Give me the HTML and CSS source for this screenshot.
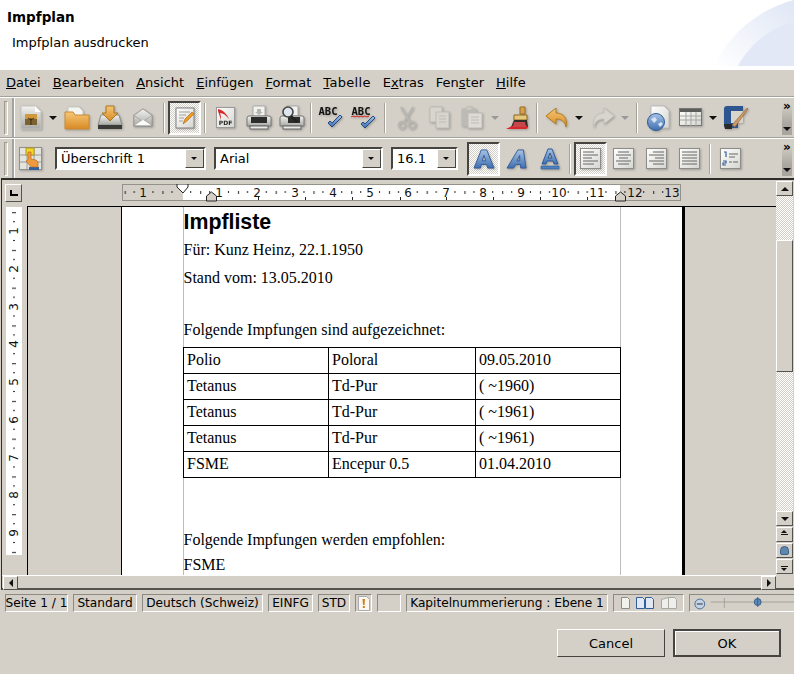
FILE: index.html
```html
<!DOCTYPE html>
<html lang="de">
<head>
  <meta charset="UTF-8" />
  <title>Impfplan</title>
  <link rel="stylesheet" href="styles.css">
</head>
<body>
  <svg class="defs" width="0" height="0">
    <defs>
      <linearGradient id="paper" x1="0" y1="0" x2="1" y2="1"><stop offset="0" stop-color="#fff"/><stop offset="1" stop-color="#d5d5d0"/></linearGradient>
      <linearGradient id="orange" x1="0" y1="0" x2="0" y2="1"><stop offset="0" stop-color="#f6c777"/><stop offset="1" stop-color="#d98a25"/></linearGradient>
      <linearGradient id="blue" x1="0" y1="0" x2="0" y2="1"><stop offset="0" stop-color="#a8c3e4"/><stop offset="1" stop-color="#3f6fb0"/></linearGradient>
      <linearGradient id="metal" x1="0" y1="0" x2="0" y2="1"><stop offset="0" stop-color="#f2f2f0"/><stop offset="1" stop-color="#a9a9a5"/></linearGradient>
      <linearGradient id="wash" x1="0" y1="1" x2="1" y2="0"><stop offset="0" stop-color="#fff"/><stop offset="1" stop-color="#dfe6f5"/></linearGradient>
      <pattern id="hticks" x="21.500" y="0" width="37.750" height="16" patternUnits="userSpaceOnUse">
        <rect x="9" y="7" width="1" height="2" fill="#222"/>
        <rect x="19" y="7" width="1" height="3" fill="#222"/>
        <rect x="28" y="7" width="1" height="2" fill="#222"/>
      </pattern>
      <pattern id="vticks" x="0" y="24" width="16" height="37.750" patternUnits="userSpaceOnUse">
        <rect x="7" y="9" width="2" height="1" fill="#222"/>
        <rect x="6" y="19" width="4" height="1" fill="#222"/>
        <rect x="7" y="28" width="2" height="1" fill="#222"/>
      </pattern>
    </defs>
  </svg>

  <header class="head">
    <div class="head-title">Impfplan</div>
    <div class="head-sub">Impfplan ausdrucken</div>
    <svg class="head-art" width="80" height="66" viewBox="0 0 80 66">
      <path d="M0 66C14 36 42 10 80 0V66z" fill="url(#wash)"/>
      <path d="M24 66C36 44 56 28 80 22V66z" fill="#e2e8f6"/>
    </svg>
  </header>

  <main class="dialog">
    <nav class="menubar">
      <span><u>D</u>atei</span>
      <span><u>B</u>earbeiten</span>
      <span><u>A</u>nsicht</span>
      <span><u>E</u>infügen</span>
      <span><u>F</u>ormat</span>
      <span class="menu-wide"><u>T</u>abelle</span>
      <span>E<u>x</u>tras</span>
      <span>Fen<u>s</u>ter</span>
      <span><u>H</u>ilfe</span>
    </nav>

    <div class="toolbar">
      <i class="grip"></i>
      <button class="tool">
        <svg width="22" height="25" viewBox="0 0 22 25"><path d="M1 1h14l6 6v17H1z" fill="url(#metal)" stroke="#c4c4bf"/><path d="M15 1v6h6z" fill="#fff"/><rect x="5" y="9" width="12" height="11" fill="#7d6231"/><path d="M5 9h12v5H5z" fill="#d09a3c"/><path d="M11 20v-7M8 13l3 2 3-2" stroke="#3d2c12" fill="none"/></svg>
      </button>
      <span class="arrow"></span>
      <button class="tool">
        <svg width="26" height="26" viewBox="0 0 26 26"><path d="M4 2h11l4 4v10H4z" fill="#f4f4f0" stroke="#c9c9c4"/><path d="M1 7h8l2 3h14v14H1z" fill="url(#orange)" stroke="#c98a34"/></svg>
      </button>
      <button class="tool">
        <svg width="26" height="26" viewBox="0 0 26 26"><path d="M4 10h18l3 10H1z" fill="url(#metal)" stroke="#8c8c88"/><rect x="1" y="20" width="24" height="4" fill="#3a3a38"/><path d="M9 1h8v7h4l-8 8-8-8h4z" fill="url(#orange)" stroke="#a8791f"/></svg>
      </button>
      <button class="tool">
        <svg width="22" height="22" viewBox="0 0 24 24"><path d="M2 9l10-7 10 7v12H2z" fill="url(#metal)" stroke="#8f8f8b"/><path d="M2 9l10 7 10-7M2 21l8-7M22 21l-8-7" fill="none" stroke="#a5a5a1"/><path d="M3 20l9-6 9 6z" fill="#fbfbf9"/></svg>
      </button>
      <i class="sep sep-9"></i>
      <button class="tool on">
        <svg width="20" height="22" viewBox="0 0 20 22"><rect x="1" y="1" width="18" height="20" fill="url(#paper)" stroke="#808080"/><path d="M4 5h11M4 8h7M4 11h5M4 14h4" stroke="#a0a09c"/><path d="M8 17l2-5 7-7 2 2-7 7z" fill="#ee9a23" stroke="#a76a10" stroke-width=".6"/></svg>
      </button>
      <i class="sep sep-8"></i>
      <button class="tool">
        <svg width="20" height="22" viewBox="0 0 20 22"><rect x=".5" y=".5" width="18" height="20" fill="url(#paper)" stroke="#999"/><path d="M2 2c5 1 9 5 11 10C10 8 7 6 4 6c1 2 1 5 1 7L2 4z" fill="#d62a2a"/><text class="pdf" x="9.500" y="18">PDF</text></svg>
      </button>
      <button class="tool">
        <svg width="26" height="26" viewBox="0 0 26 26"><path d="M7 1h12v10H7z" fill="#f2f2ee" stroke="#aaa"/><path d="M11 4h4v3h2l-4 3-4-3h2z" fill="#b5b5b1"/><path d="M3 11h20a2 2 0 0 1 2 2v8H1v-8a2 2 0 0 1 2-2z" fill="url(#metal)" stroke="#777"/><rect x="5" y="12" width="16" height="6" fill="#2c2c2a"/><rect x="4" y="21" width="18" height="3" fill="#e9e9e5" stroke="#666"/></svg>
      </button>
      <button class="tool">
        <svg width="26" height="26" viewBox="0 0 26 26"><path d="M8 1h11v10H8z" fill="#f2f2ee" stroke="#aaa"/><path d="M3 11h20a2 2 0 0 1 2 2v8H1v-8a2 2 0 0 1 2-2z" fill="url(#metal)" stroke="#777"/><rect x="9" y="12" width="12" height="6" fill="#2c2c2a"/><rect x="4" y="21" width="18" height="3" fill="#e9e9e5" stroke="#666"/><circle cx="9" cy="7" r="5" fill="#dde6ee" stroke="#444" stroke-width="1.600"/><path d="M12 11l6 6" stroke="#222" stroke-width="2.400"/></svg>
      </button>
      <i class="sep sep-5"></i>
      <button class="tool">
        <svg width="26" height="26" viewBox="0 0 26 26"><text class="abc" x="11" y="10">ABC</text><path d="M11 18l4 4L25 12l-2-2-8 8-2-2z" fill="url(#blue)" stroke="#1f4a86"/></svg>
      </button>
      <button class="tool">
        <svg width="26" height="26" viewBox="0 0 26 26"><text class="abc" x="11" y="10">ABC</text><path d="M1 12l2-1 2 1 2-1 2 1 2-1 2 1 2-1 2 1 2-1" fill="none" stroke="#d32020"/><path d="M11 19l4 4L25 13l-2-2-8 8-2-2z" fill="url(#blue)" stroke="#1f4a86"/></svg>
      </button>
      <i class="sep sep-11"></i>
      <button class="tool">
        <svg width="20" height="24" viewBox="0 0 20 24" fill="none" stroke="#b8b6b0" stroke-width="2"><path d="M4 1l9 15M16 1L7 16"/><circle cx="5" cy="19" r="3.200"/><circle cx="15" cy="19" r="3.200"/></svg>
      </button>
      <button class="tool">
        <svg width="22" height="24" viewBox="0 0 22 24" fill="#d8d5cf" stroke="#bdbbb5"><path d="M1 1h12v15H1z"/><path d="M7 6h13v16H7z"/><path d="M10 10h7M10 13h7M10 16h7" /></svg>
      </button>
      <button class="tool tool-left">
        <svg width="22" height="24" viewBox="0 0 22 24" fill="#cfccc6" stroke="#bdbbb5"><path d="M1 3h14v17H1z" fill="#bdbab4"/><path d="M5 1h6v3H5z"/><path d="M7 7h14v15H7z" fill="#dedbd6"/><path d="M10 11h8M10 14h8M10 17h8"/></svg>
      </button>
      <span class="arrow arrow-off arrow-tight"></span>
      <button class="tool">
        <svg width="24" height="24" viewBox="0 0 24 24"><path d="M12 1h5v7h-5z" fill="#d7a04c" stroke="#9a6c22" transform="translate(2)"/><path d="M8 9h13v5H8z" fill="#e7c77c" stroke="#8d6a25"/><path d="M8 14h13l1 7H5z" fill="#302c28"/><path d="M0 23l8-4h12l2 3-2 1z" fill="#d8262c"/><path d="M8 16h11l1 5H7z" fill="#c8454a"/></svg>
      </button>
      <i class="sep sep-6"></i>
      <button class="tool">
        <svg width="24" height="22" viewBox="0 0 24 22"><path d="M11 1L1 9l10 8v-5c5 0 9 2 10 8 2-9-3-14-10-14z" fill="url(#orange)" stroke="#b07c1e"/></svg>
      </button>
      <span class="arrow"></span>
      <button class="tool">
        <svg width="24" height="22" viewBox="0 0 24 22"><path d="M13 1l10 8-10 8v-5c-5 0-9 2-10 8-2-9 3-14 10-14z" fill="#d8d5cf" stroke="#c2bfb9"/></svg>
      </button>
      <span class="arrow arrow-off"></span>
      <i class="sep sep-9"></i>
      <button class="tool">
        <svg width="24" height="26" viewBox="0 0 24 26"><path d="M5 1h13l5 5v17H5z" fill="url(#paper)" stroke="#bbb"/><circle cx="10" cy="17" r="8.500" fill="url(#blue)" stroke="#2d5b97"/><path d="M5 14l4-2 2 3-3 3zM12 19l3-2 2 2-3 3z" fill="#d6e4f5"/></svg>
      </button>
      <button class="tool">
        <svg width="24" height="20" viewBox="0 0 24 20"><rect x=".5" y=".5" width="22" height="17" fill="url(#paper)" stroke="#777"/><rect x="1" y="1" width="21" height="3" fill="#5c5c5a"/><path d="M1 8h21M1 12h21M7 4v14M12 4v14M17 4v14" stroke="#a5a5a1"/></svg>
      </button>
      <span class="arrow arrow-slim"></span>
      <button class="tool">
        <svg width="26" height="26" viewBox="0 0 26 26"><path d="M4 1h16v5H8v12h7v5H3a2 2 0 0 1-2-2V4a3 3 0 0 1 3-3z" fill="#2d5590"/><path d="M8 6h12v12H8z" fill="#d8d4cc"/><path d="M1 19h8v5H2z" fill="#2a2a28"/><path d="M9 20L24 3l1 1L12 22z" fill="#c99a6a" stroke="#8f5a2a" stroke-width=".6"/></svg>
      </button>
      <div class="more"><span class="chevrons">»</span><span class="more-arrow"></span></div>
    </div>

    <div class="toolbar toolbar-format">
      <i class="grip"></i>
      <button class="tool">
        <svg width="24" height="24" viewBox="0 0 24 24"><rect x=".5" y=".5" width="22" height="22" fill="#e4e4df" stroke="#8f8f8b"/><path d="M8 .5v22M15 .5v22M.5 8h22M.5 15h22" stroke="#9a9a96"/><rect x="7" y="1" width="8" height="7" fill="#f5d52a" stroke="#b09a18"/><rect x="10" y="20" width="10" height="3" fill="#33609e"/><path d="M9 5h3v7l5 1 2 2v5H12l-5-6 2-1z" fill="#ef9a3e" stroke="#b96a1a" stroke-width=".7"/></svg>
      </button>
      <div class="combo combo-style"><span class="combo-text">Überschrift 1</span><span class="combo-btn"></span></div>
      <div class="combo combo-font"><span class="combo-text">Arial</span><span class="combo-btn"></span></div>
      <div class="combo combo-size"><span class="combo-text">16.1</span><span class="combo-btn"></span></div>
      <button class="tool on first-fmt">
        <svg width="22" height="20" viewBox="0 0 24 22"><path d="M9 1h6l8 20h-7l-1-4H9l-1 4H1zM12 7l-2 6h4z" fill="url(#blue)" stroke="#2d5b97" fill-rule="evenodd"/></svg>
      </button>
      <button class="tool">
        <svg width="22" height="20" viewBox="0 0 24 22"><path d="M13 1h6l3 20h-6v-4h-5l-3 4H1zM15 7l-3 6h3z" fill="url(#blue)" stroke="#2d5b97" fill-rule="evenodd"/></svg>
      </button>
      <button class="tool">
        <svg width="20" height="22" viewBox="0 0 20 22"><path d="M8 1h4l6 15h-4l-1-3H7l-1 3H2zM10 5l-2 5h4z" fill="url(#blue)" stroke="#2d5b97" fill-rule="evenodd"/><rect x="1" y="18" width="18" height="3" fill="#4d7fbe" stroke="#2d5b97" stroke-width=".6"/></svg>
      </button>
      <i class="sep sep-8"></i>
      <button class="tool on">
        <svg width="22" height="22" viewBox="0 0 22 22"><rect x=".5" y=".5" width="20" height="20" fill="url(#paper)" stroke="#8c8c88"/><path d="M3 4h11M3 7h15M3 10h9M3 13h15M3 16h11" stroke="#666"/></svg>
      </button>
      <button class="tool">
        <svg width="22" height="22" viewBox="0 0 22 22"><rect x=".5" y=".5" width="20" height="20" fill="url(#paper)" stroke="#8c8c88"/><path d="M5 4h11M3 7h15M6 10h9M3 13h15M5 16h11" stroke="#666"/></svg>
      </button>
      <button class="tool">
        <svg width="22" height="22" viewBox="0 0 22 22"><rect x=".5" y=".5" width="20" height="20" fill="url(#paper)" stroke="#8c8c88"/><path d="M7 4h11M3 7h15M9 10h9M3 13h15M7 16h11" stroke="#666"/></svg>
      </button>
      <button class="tool">
        <svg width="22" height="22" viewBox="0 0 22 22"><rect x=".5" y=".5" width="20" height="20" fill="url(#paper)" stroke="#8c8c88"/><path d="M3 4h15M3 7h15M3 10h15M3 13h15M3 16h15" stroke="#666"/></svg>
      </button>
      <i class="sep sep-8"></i>
      <button class="tool">
        <svg width="22" height="22" viewBox="0 0 22 22"><rect x=".5" y=".5" width="20" height="20" fill="url(#paper)" stroke="#8c8c88"/><path d="M4 4h2v5M3 13h3v2H3v2h3" fill="none" stroke="#33609e" stroke-width="1.200"/><path d="M9 6h9M9 9h6M9 14h3M13 14h5" stroke="#666"/></svg>
      </button>
      <div class="more"><span class="chevrons">»</span><span class="more-arrow"></span></div>
    </div>

    <section class="workspace">
      <div class="corner"><span class="corner-mark"></span></div>
      <div class="hruler">
        <svg width="559" height="18" viewBox="0 0 559 18">
          <rect x=".5" y=".5" width="558" height="16" fill="#d4d0c8" stroke="#94918a"/>
          <rect x="61" y="1" width="437" height="15" fill="#fff"/>
          <rect x="1" y="1" width="557" height="15" fill="url(#hticks)"/>
          <path class="tabs" d="M136.500 16v-3M183.500 16v-3M230.500 16v-3M278.500 16v-3M324.500 16v-3M371.500 16v-3M418.500 16v-3M465.500 16v-3"/>
          <g class="rnum">
            <text x="21" y="13">1</text><text x="97" y="13">1</text><text x="135" y="13">2</text><text x="173" y="13">3</text><text x="211" y="13">4</text><text x="248" y="13">5</text><text x="286" y="13">6</text><text x="324" y="13">7</text><text x="361" y="13">8</text><text x="399" y="13">9</text><text x="437" y="13">10</text><text x="475" y="13">11</text><text x="513" y="13">12</text><text x="550" y="13">13</text>
          </g>
          <path d="M55 0h11v3l-5 6-6-6z" fill="#fff" stroke="#222"/>
          <path d="M84.500 17v-5l5-4 5 4v5z" fill="#d4d0c8" stroke="#222"/>
          <path d="M493.500 17v-5l5-4 5 4v5z" fill="#d4d0c8" stroke="#222"/>
        </svg>
      </div>
      <div class="vscroll">
        <span class="sbtn sbtn-first"><i class="tri-up"></i></span>
        <div class="vtrack"><div class="vthumb"></div></div>
        <span class="sbtn"><i class="tri-down"></i></span>
        <span class="sbtn"><i class="bar-up"></i></span>
        <span class="sbtn"><i class="nav-dot"></i></span>
        <span class="sbtn"><i class="bar-down"></i></span>
      </div>
      <div class="vruler">
        <svg width="16" height="348" viewBox="0 0 16 348">
          <rect x="0" y="0" width="16" height="348" fill="#fff"/>
          <rect x="0" y="0" width="16" height="348" fill="url(#vticks)"/>
          <g class="rnum">
            <text transform="translate(12 24) rotate(-90)">1</text>
            <text transform="translate(12 62) rotate(-90)">2</text>
            <text transform="translate(12 100) rotate(-90)">3</text>
            <text transform="translate(12 137) rotate(-90)">4</text>
            <text transform="translate(12 175) rotate(-90)">5</text>
            <text transform="translate(12 213) rotate(-90)">6</text>
            <text transform="translate(12 251) rotate(-90)">7</text>
            <text transform="translate(12 288) rotate(-90)">8</text>
            <text transform="translate(12 326) rotate(-90)">9</text>
          </g>
        </svg>
      </div>
      <div class="doc">
        <article class="page">
          <div class="text-area">
            <h1>Impfliste</h1>
            <p>Für: Kunz Heinz, 22.1.1950</p>
            <p class="p-stand">Stand vom: 13.05.2010</p>
            <p class="p-intro">Folgende Impfungen sind aufgezeichnet:</p>
            <table class="vacc">
              <tr><td>Polio</td><td>Poloral</td><td>09.05.2010</td></tr>
              <tr><td>Tetanus</td><td>Td-Pur</td><td>( ~1960)</td></tr>
              <tr><td>Tetanus</td><td>Td-Pur</td><td>( ~1961)</td></tr>
              <tr><td>Tetanus</td><td>Td-Pur</td><td>( ~1961)</td></tr>
              <tr><td>FSME</td><td>Encepur 0.5</td><td>01.04.2010</td></tr>
            </table>
            <p class="p-rec">Folgende Impfungen werden empfohlen:</p>
            <p>FSME</p>
          </div>
        </article>
      </div>
      <div class="hscroll">
        <span class="hbtn"><i class="tri-left"></i></span>
        <span class="hbtn hbtn-end"><i class="tri-right"></i></span>
      </div>
    </section>

    <footer class="status">
      <span class="cell cell-page">Seite 1 / 1</span>
      <span class="cell cell-style">Standard</span>
      <span class="cell cell-lang">Deutsch (Schweiz)</span>
      <span class="cell cell-ins">EINFG</span>
      <span class="cell cell-std">STD</span>
      <span class="cell cell-warn">
        <svg width="12" height="15" viewBox="0 0 12 15"><path d="M.5.500h8l3 3v11H.5z" fill="#faf9f4" stroke="#aaa"/><path d="M4.500 3h2.500l-.5 6H5z" fill="#dc7a14"/><rect x="4.800" y="10" width="2" height="2" fill="#dc7a14"/></svg>
      </span>
      <span class="cell cell-blank"></span>
      <span class="cell cell-num">Kapitelnummerierung : Ebene 1</span>
      <span class="cell cell-view">
        <svg width="58" height="12" viewBox="0 0 58 12">
          <path d="M1.500.500h6l2 2v9h-8z" fill="#f3f3ee" stroke="#8d8d88"/>
          <path d="M16.500.500h6l2 2v9h-8zM25.500.500h6l2 2v9h-8z" fill="#dfe8f3" stroke="#2f5f9c"/>
          <path d="M41.500 2.500l7-2v11l-7 0zM48.500 .5h6l2 2v9h-8z" fill="#eeeeea" stroke="#a8a8a3"/>
        </svg>
      </span>
      <span class="cell cell-zoom">
        <svg width="106" height="16" viewBox="0 0 106 16">
          <circle cx="10" cy="9" r="5" fill="#c4d2e4" stroke="#4a6d98"/>
          <path d="M7 9h6" stroke="#234"/>
          <path class="slider" d="M21 7h85M35 3v10"/>
          <circle cx="69" cy="7" r="3.500" fill="#5e8bb8" stroke="#3a5f88"/>
          <path d="M69 2v10" stroke="#3a5f88"/>
        </svg>
      </span>
    </footer>

    <div class="actions">
      <button class="btn">Cancel</button>
      <button class="btn btn-default">OK</button>
    </div>
  </main>
</body>
</html>
```

FILE: styles.css
```css
* { box-sizing: border-box; }
html, body { margin: 0; padding: 0; }
body {
  width: 794px;
  height: 674px;
  overflow: hidden;
  font-family: "DejaVu Sans", sans-serif;
  font-size: 13px;
  color: #000;
  background: #d4d0c8;
}
.defs { position: absolute; }

/* dialog header */
.head {
  position: relative;
  height: 70px;
  background: #fff;
  overflow: hidden;
}
.head-title {
  position: relative;
  padding: 9px 0 0 7px;
  font-weight: bold;
  font-size: 13.500px;
  line-height: 16px;
}
.head-sub {
  position: relative;
  padding: 10px 0 0 12px;
  line-height: 16px;
  font-size: 13px;
}
.head-art { position: absolute; right: 0; top: 0; }

.dialog { height: 604px; }

/* menu */
.menubar {
  display: flex;
  height: 27px;
  padding: 4px 0 0 6px;
  gap: 12px;
  line-height: 18px;
  border-bottom: 1px solid #a5a29b;
}
.menu-wide { letter-spacing: .3px; }

/* toolbars */
.toolbar {
  display: flex;
  align-items: center;
  height: 41px;
  border-top: 1px solid #fff;
  border-bottom: 1px solid #a5a29b;
  position: relative;
}
.toolbar-format { height: 40px; border-bottom: 0; }
.grip {
  flex: none;
  width: 4px;
  height: 34px;
  margin: 0 6px 0 4px;
  border: 1px solid #9c9992;
  border-right-color: #fff;
  border-bottom-color: #fff;
}
.toolbar::before {
  content: "";
  position: absolute;
  left: 12px;
  top: 0;
  bottom: 0;
  width: 2px;
  background: #a5a29b;
  border-right: 1px solid #fff;
}
.tool {
  flex: none;
  display: flex;
  align-items: center;
  justify-content: center;
  width: 33px;
  height: 34px;
  padding: 0;
  border: 0;
  background: transparent;
}
.tool svg { filter: drop-shadow(1px 1px 1px rgba(0,0,0,.25)); }
.on {
  width: 33px;
  border: 2px solid;
  border-color: #45443f #fff #fff #45443f;
  background: repeating-conic-gradient(#d4d0c8 0 25%, #fff 0 50%) 0 0 / 2px 2px;
}
.tool-left { justify-content: flex-start; padding-left: 5px; }
.arrow {
  flex: none;
  width: 13px;
  height: 34px;
  position: relative;
}
.arrow::after {
  content: "";
  position: absolute;
  left: 2px;
  top: 15px;
  border: 4px solid transparent;
  border-top: 4px solid #111;
  border-bottom: 0;
}
.arrow-off::after { border-top-color: #999; }
.arrow-tight { width: 12px; }
.arrow-slim { width: 12px; }
.sep {
  flex: none;
  height: 30px;
  background: linear-gradient(90deg, #a5a29b 1px, #fff 1px, #fff 2px, transparent 2px) no-repeat center / 2px 100%;
}
.sep-5 { width: 5px; }
.sep-6 { width: 6px; }
.sep-8 { width: 8px; }
.sep-9 { width: 9px; }
.sep-11 { width: 11px; }

.more {
  position: absolute;
  right: 2px;
  top: 2px;
  width: 10px;
  height: 35px;
  background: linear-gradient(#d4d0c8 10%, #a9a69f 70%);
}
.chevrons {
  display: block;
  font-weight: bold;
  font-size: 12px;
  line-height: 12px;
  text-align: center;
}
.more-arrow {
  position: absolute;
  left: 1px;
  bottom: 4px;
  border: 4px solid transparent;
  border-top: 4px solid #111;
  border-bottom: 0;
}

/* combo boxes */
.combo {
  flex: none;
  display: flex;
  height: 23px;
  background: #fff;
  border: 2px solid;
  border-color: #45443f #fff #fff #45443f;
}
.combo-style { width: 151px; margin-left: 8px; }
.combo-font { width: 169px; margin-left: 8px; }
.combo-size { width: 67px; margin-left: 8px; }
.combo-text { flex: 1; padding-left: 4px; line-height: 20px; }
.combo-btn {
  flex: none;
  width: 19px;
  position: relative;
  background: #d4d0c8;
  border: 1px solid;
  border-color: #fff #45443f #45443f #fff;
}
.combo-btn::after {
  content: "";
  position: absolute;
  left: 5px;
  top: 7px;
  border: 3px solid transparent;
  border-top: 3px solid #111;
  border-bottom: 0;
}
.first-fmt { margin-left: 9px; }

/* workspace */
.workspace {
  display: grid;
  grid-template-columns: 25px 749px 17px;
  grid-template-rows: 26px 369px 15px;
  height: 412px;
  margin-left: 1px;
  border-top: 2px solid #2e2d29;
  border-left: 1px solid #2e2d29;
  border-bottom: 2px solid #55534d;
  width: 793px;
}
.corner {
  grid-column: 1;
  grid-row: 1;
  width: 17px;
  height: 18px;
  margin: 4px 0 0 3px;
  background: #d4d0c8;
  border: 1px solid;
  border-color: #fff #55534d #55534d #fff;
  position: relative;
}
.corner-mark {
  position: absolute;
  left: 4px;
  top: 5px;
  width: 8px;
  height: 6px;
  border-left: 2px solid #000;
  border-bottom: 2px solid #000;
}
.hruler {
  grid-column: 2;
  grid-row: 1;
  padding: 4px 0 0 95px;
}
.rnum text {
  font-family: "DejaVu Sans", sans-serif;
  font-size: 12px;
  text-anchor: middle;
  fill: #111;
}
.tabs { stroke: #222; fill: none; }

.vruler {
  grid-column: 1;
  grid-row: 2;
  padding: 1px 0 0 4px;
}
.doc {
  grid-column: 2;
  grid-row: 2;
  overflow: hidden;
  background: #d4d0c8;
  border-top: 1px solid #000;
  border-left: 1px solid #000;
}
.page {
  width: 564px;
  height: 368px;
  margin-left: 93px;
  overflow: hidden;
  background: #fff;
  border-left: 1px solid #000;
  border-right: 3px solid #000;
}
.text-area {
  width: 438px;
  min-height: 368px;
  margin-left: 61px;
  border-left: 1px solid #bdbdbd;
  border-right: 1px solid #bdbdbd;
  font-family: "Liberation Serif", serif;
  font-size: 16px;
  line-height: 26px;
  color: #000;
}
h1 {
  margin: 0 0 0 -.5px;
  font-family: "Liberation Sans", sans-serif;
  font-size: 21.330px;
  line-height: 30px;
}
p { margin: 0 0 0 -.5px; }
.p-stand { margin-top: 2px; }
.p-intro { margin-top: 26px; }
.p-rec { margin-top: 49px; margin-bottom: -1px; }
.vacc {
  width: 438px;
  margin: 4px 0 0 -1px;
  border-collapse: collapse;
  table-layout: fixed;
}
.vacc td {
  height: 26px;
  padding: 0 3px 1px;
  border: 1px solid #000;
  line-height: 24px;
}
.vacc td:nth-child(1) { width: 145px; }
.vacc td:nth-child(2) { width: 147px; }

/* scrollbars */
.vscroll {
  grid-column: 3;
  grid-row: 1 / span 2;
  display: flex;
  flex-direction: column;
  padding-top: 1px;
}
.sbtn {
  flex: none;
  display: flex;
  align-items: center;
  justify-content: center;
  height: 15px;
  margin-bottom: 1px;
  background: #d4d0c8;
  border: 1px solid;
  border-color: #fff #55534d #55534d #fff;
}
.sbtn-first { margin-bottom: 0; }
.vtrack {
  flex: none;
  height: 315px;
  padding-top: 44px;
  background: repeating-conic-gradient(#d4d0c8 0 25%, #fff 0 50%) 0 0 / 2px 2px;
}
.vthumb {
  height: 132px;
  background: #d4d0c8;
  border: 1px solid;
  border-color: #fff #55534d #55534d #fff;
}
.tri-up, .tri-down, .tri-left, .tri-right { display: block; width: 0; height: 0; border: 4px solid transparent; }
.tri-up { border-bottom-color: #111; border-top: 0; }
.tri-down { border-top-color: #111; border-bottom: 0; }
.tri-left { border-right-color: #111; border-left: 0; }
.tri-right { border-left-color: #111; border-right: 0; }
.bar-up, .bar-down {
  display: block;
  width: 7px;
  height: 9px;
  background: linear-gradient(#111, #111) 0 4px / 7px 1px no-repeat;
  position: relative;
}
.bar-up::after, .bar-down::after {
  content: "";
  position: absolute;
  left: 0;
  border: 3.5px solid transparent;
}
.bar-up::after { top: 0; border-bottom-color: #111; border-top: 0; }
.bar-down::after { bottom: 0; border-top-color: #111; border-bottom: 0; }
.nav-dot {
  display: block;
  width: 9px;
  height: 9px;
  border-radius: 5px 5px 2px 2px;
  background: #5f87ad;
  border: 1px solid #3a5f88;
}
.hscroll {
  grid-column: 1 / span 2;
  grid-row: 3;
  display: flex;
  justify-content: space-between;
  border-top: 1px solid #fff;
}
.hbtn {
  display: flex;
  align-items: center;
  justify-content: center;
  width: 15px;
  background: #d4d0c8;
  border: 1px solid;
  border-color: #fff #55534d #55534d #fff;
  margin-left: 1px;
}

/* status bar */
.status {
  display: flex;
  height: 18px;
  margin-top: 4px;
  padding-left: 5px;
  gap: 5px;
  font-size: 12.150px;
  line-height: 16px;
}
.cell {
  flex: none;
  display: flex;
  align-items: center;
  justify-content: center;
  border: 1px solid;
  border-color: #8d8a83 #fff #fff #8d8a83;
  white-space: nowrap;
  overflow: hidden;
}
.cell-page { width: 63px; }
.cell-style { width: 64px; }
.cell-lang { width: 121px; }
.cell-ins { width: 45px; }
.cell-std { width: 32px; }
.cell-warn { width: 17px; }
.cell-blank { width: 24px; }
.cell-num { width: 202px; }
.cell-view { width: 71px; }
.cell-zoom { width: 106px; justify-content: flex-start; }
.slider { stroke: #a5a29b; fill: none; }

/* dialog buttons */
.actions {
  display: flex;
  justify-content: flex-end;
  gap: 8px;
  margin-top: 17px;
  padding-right: 13px;
}
.btn {
  width: 108px;
  height: 28px;
  padding: 0;
  font-family: "DejaVu Sans", sans-serif;
  font-size: 13px;
  color: #000;
  background: #d4d0c8;
  border: 1px solid;
  border-color: #fff #45443f #45443f #fff;
}
.btn-default { border: 2px solid; border-color: #45443f; box-shadow: inset 1px 1px 0 #fff; }

.pdf { font-family: "DejaVu Sans", sans-serif; font-size: 6px; font-weight: bold; text-anchor: middle; fill: #222; }
.abc { font-family: "DejaVu Sans Mono", monospace; font-size: 10.500px; font-weight: bold; text-anchor: middle; fill: #111; }
```
